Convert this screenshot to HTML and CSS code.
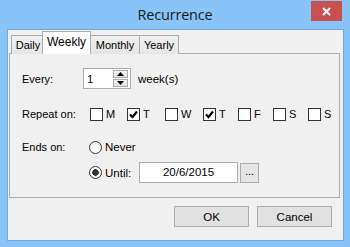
FILE: index.html
```html
<!DOCTYPE html>
<html lang="en">

<head>
    <meta charset="UTF-8">
    <title>Recurrence</title>
    <link rel="stylesheet" href="styles.css">
</head>

<body>
    <div class="window">
        <div class="titlebar">
            <span></span>
            <span class="title">Recurrence</span>
            <button class="close-btn">
                <svg width="9" height="9" viewBox="0 0 9 9">
                    <path d="M1 1 L8 8 M8 1 L1 8" stroke="#fff" stroke-width="2" />
                </svg>
            </button>
        </div>

        <div class="client">
            <div class="tabs">
                <div class="tab tab-daily">Daily</div>
                <div class="tab tab-weekly active">Weekly</div>
                <div class="tab tab-monthly">Monthly</div>
                <div class="tab tab-yearly">Yearly</div>
            </div>

            <div class="panel">
                <div class="row row-every">
                    <span class="label label-every">Every:</span>
                    <div class="spin">
                        <span class="spin-value">1</span>
                        <div class="spin-buttons">
                            <span class="spin-btn"><svg width="7" height="4" viewBox="0 0 7 4"><path d="M0 4 L3.5 0 L7 4Z" fill="#000" /></svg></span>
                            <span class="spin-btn"><svg width="7" height="4" viewBox="0 0 7 4"><path d="M0 0 L3.5 4 L7 0Z" fill="#000" /></svg></span>
                        </div>
                    </div>
                    <span class="unit">week(s)</span>
                </div>

                <div class="row row-repeat">
                    <span class="label">Repeat on:</span>
                    <div class="days">
                        <label class="check"><span class="box"></span>M</label>
                        <label class="check"><span class="box checked"><svg width="11" height="11" viewBox="0 0 11 11"><path d="M2 5.5 L4.5 8 L9 2.5" stroke="#000" stroke-width="2.2" fill="none" /></svg></span>T</label>
                        <label class="check"><span class="box"></span>W</label>
                        <label class="check"><span class="box checked"><svg width="11" height="11" viewBox="0 0 11 11"><path d="M2 5.5 L4.5 8 L9 2.5" stroke="#000" stroke-width="2.2" fill="none" /></svg></span>T</label>
                        <label class="check"><span class="box"></span>F</label>
                        <label class="check"><span class="box"></span>S</label>
                        <label class="check"><span class="box"></span>S</label>
                    </div>
                </div>

                <div class="row row-ends">
                    <span class="label">Ends on:</span>
                    <label class="radio"><span class="circle"></span>Never</label>
                </div>

                <div class="row row-until">
                    <span class="label"></span>
                    <label class="radio until"><span class="circle selected"></span>Until:</label>
                    <div class="date-input">20/6/2015</div>
                    <button class="dots-btn">...</button>
                </div>
            </div>

            <div class="buttons">
                <button class="dlg-btn">OK</button>
                <button class="dlg-btn">Cancel</button>
            </div>
        </div>
    </div>
</body>

</html>
```

FILE: styles.css
```css
* {
    box-sizing: border-box;
}

body {
    margin: 0;
    width: 350px;
    height: 247px;
    overflow: hidden;
    font-family: 'Liberation Sans', Arial, sans-serif;
    font-size: 11px;
    color: #000;
}

.window {
    width: 350px;
    height: 247px;
    background-color: #88c4f7;
    display: flex;
    flex-direction: column;
}

.titlebar {
    height: 29px;
    display: grid;
    grid-template-columns: 1fr auto 1fr;
    align-items: start;
}

.title {
    font-family: 'Open Sans', 'Noto Sans', sans-serif;
    font-size: 14.5px;
    color: #1a1a1a;
    margin-top: 5px;
    letter-spacing: -0.2px;
}

.close-btn {
    justify-self: end;
    width: 31px;
    height: 20px;
    margin: 1px 8px 0 0;
    padding: 0;
    border: none;
    background-color: #c75050;
    display: flex;
    align-items: center;
    justify-content: center;
}

.client {
    flex: 1;
    margin: 0 6px 6px 7px;
    border: 1px solid #74a6d8;
    background-color: #f0f0f0;
    padding: 1px 0 0 1px;
}

/* tabs */
.tabs {
    height: 23px;
    display: flex;
    align-items: flex-end;
    padding-left: 1px;
    position: relative;
    z-index: 1;
    margin-bottom: -1px;
}

.tab {
    height: 19px;
    padding-top: 3px;
    border: 1px solid #acacac;
    border-bottom: none;
    background: linear-gradient(#f0f0f0, #e5e5e5);
    font-size: 11px;
    text-align: center;
    margin-right: -1px;
}

.tab-daily {
    width: 34px;
    margin-left: 1px;
}

.tab-weekly {
    width: 49px;
}

.tab-monthly {
    width: 50px;
}

.tab-yearly {
    width: 40px;
}

.tab.active {
    height: 23px;
    background: #fff;
    padding-top: 3px;
    margin: 0 -1px 0 -2px;
    position: relative;
    z-index: 2;
    font-size: 12px;
}

.panel {
    width: 331px;
    height: 145px;
    border: 1px solid #acacac;
    background-color: #f0f0f0;
    padding: 14px 0 0 12px;
}

.row {
    display: flex;
    align-items: center;
}

.label {
    width: 61px;
    flex-shrink: 0;
}

/* every */
.row-every {
    height: 21px;
}

.spin {
    width: 48px;
    height: 21px;
    border: 1px solid #acacac;
    background: #fff;
    display: flex;
    align-items: center;
    justify-content: space-between;
    padding: 0 2px 0 3px;
}

.spin-value {
    font-size: 11.5px;
}

.spin-buttons {
    display: flex;
    flex-direction: column;
    gap: 1px;
}

.spin-btn {
    width: 15px;
    height: 8px;
    border: 1px solid #acacac;
    background: linear-gradient(#f2f2f2, #e2e2e2);
    display: flex;
    align-items: center;
    justify-content: center;
}

.unit {
    margin-left: 7px;
    font-size: 11.5px;
}

/* repeat on */
.row-repeat {
    height: 20px;
    margin-top: 15px;
}

.days {
    margin-left: 7px;
    display: grid;
    grid-template-columns: 37px 38px 38px 35px 35px 35px auto;
}

.check {
    display: flex;
    align-items: center;
    gap: 3px;
}

.box {
    width: 13px;
    height: 13px;
    border: 1px solid #333;
    background: #fff;
    display: flex;
    align-items: center;
    justify-content: center;
}

/* ends on */
.row-ends {
    height: 20px;
    margin-top: 13px;
}

.radio {
    display: flex;
    align-items: center;
    gap: 3px;
    margin-left: 6px;
    font-size: 11.5px;
}

.circle {
    width: 13px;
    height: 13px;
    border: 1px solid #333;
    border-radius: 50%;
    background: #fff;
}

.circle.selected {
    background: radial-gradient(circle, #333 0 3px, #fff 3.6px);
}

.row-until {
    height: 21px;
    margin-top: 5px;
}

.until {
    width: 50px;
}

.date-input {
    width: 99px;
    height: 21px;
    border: 1px solid #acacac;
    background: #fff;
    text-align: center;
    line-height: 19px;
    font-size: 11.5px;
}

.dots-btn {
    width: 19px;
    height: 20px;
    margin-left: 2px;
    padding: 0 0 4px 0;
    border: 1px solid #acacac;
    background: #e5e5e5;
    font-family: 'Liberation Sans', Arial, sans-serif;
    font-size: 11px;
    line-height: 10px;
}

/* buttons */
.buttons {
    display: flex;
    justify-content: flex-end;
    gap: 8px;
    margin: 8px 11px 0 0;
}

.dlg-btn {
    width: 75px;
    height: 21px;
    padding: 0;
    border: 1px solid #adadad;
    background: #e1e1e1;
    font-family: 'Liberation Sans', Arial, sans-serif;
    font-size: 11.5px;
    color: #000;
}
```
